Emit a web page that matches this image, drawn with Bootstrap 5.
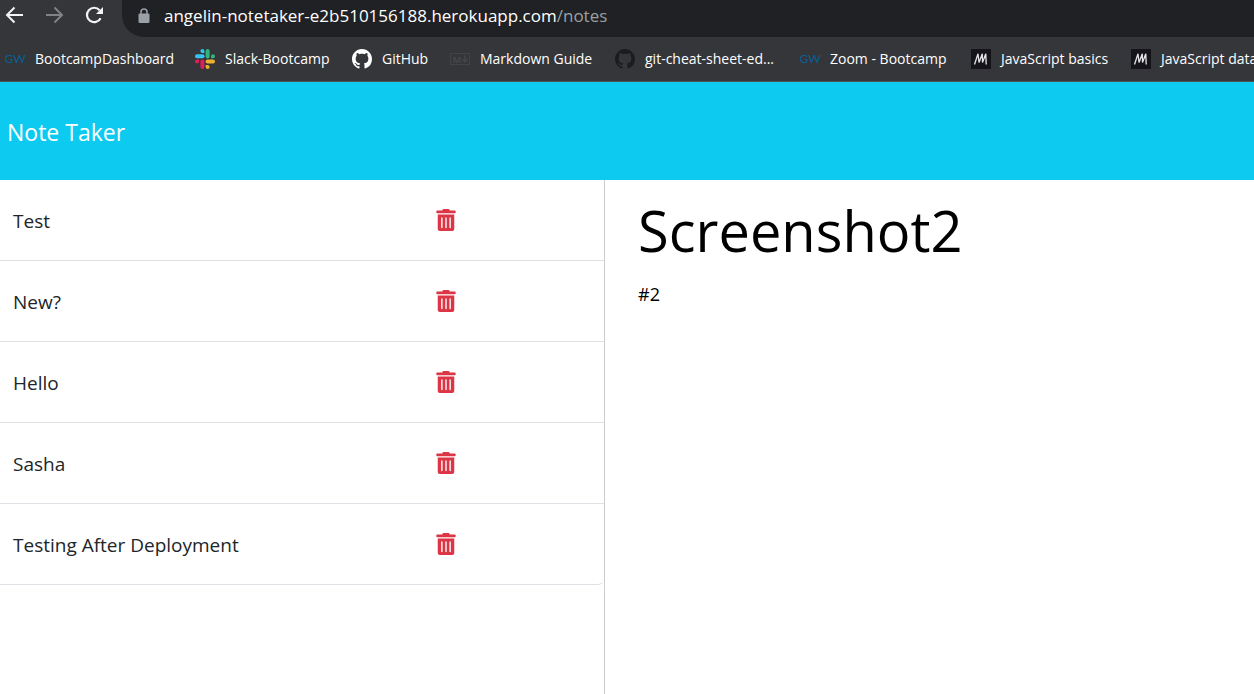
<!DOCTYPE html>
<html lang="en">
<head>
<meta charset="utf-8">
<meta name="viewport" content="width=device-width, initial-scale=1">
<title>Note Taker</title>
<link href="https://cdn.jsdelivr.net/npm/bootstrap@5.3.0/dist/css/bootstrap.min.css" rel="stylesheet">
<style>
  body { font-family: "Open Sans", "Noto Sans", sans-serif; background: #fff; }
  .browser { background: #35363a; color: #fff; border-bottom: 1px solid #505256; }
  .toolbar { height: 37px; }
  .toolbar .tool { width: 40px; height: 30px; color: #f1f3f4; }
  .toolbar .tool:disabled { color: #808285; opacity: 1; }
  .address { background: #202124; border-radius: 0 0 0 22px; height: 37px; font-family: "Noto Sans", sans-serif; font-size: 16px; line-height: 32px; margin-left: 2px; padding-left: 16px; }
  .address-path { color: #9aa0a6; }
  .address-text { margin-left: 14px; font-family: "Open Sans", sans-serif; font-size: 17px; }
  .bookmarks { display: grid; grid-template-columns: 190px 157px 98px 165px 185px 171px 160px auto; height: 44px; padding-left: 5px; font-size: 14px; }
  .bookmarks a { gap: 10px; color: #fff; }
  .bookmarks span { padding-bottom: 2px; }
  .site-header { background: #0dcaf0; height: 98px; padding: 2px 7px 0; }
  .site-header a { font-size: 23px; }
  .workspace { min-height: calc(100vh - 180px); }
  .notes-pane { flex: 0 0 48.25%; border-right: 1px solid #ccc; }
  .note-row { height: 81px; padding: 0 13px; border-width: 0 0 1px; font-size: 19px; color: #212529; }
  .note-row:last-child { border-bottom-right-radius: 6px; }
  .note-title { flex: 0 0 73%; padding-top: 2px; }
  .note-pane { padding: 14px 33px; color: #000; }
  .note-heading { font-size: 56px; line-height: 72px; font-weight: 400; margin-bottom: 14px; }
  .note-body { font-size: 18px; line-height: 28px; }
</style>
</head>
<body>
<svg class="d-none" aria-hidden="true">
  <symbol id="trash" viewBox="0 0 448 512"><path fill="currentColor" d="M32 464a48 48 0 0 0 48 48h288a48 48 0 0 0 48-48V128H32zm272-256a16 16 0 0 1 32 0v224a16 16 0 0 1-32 0zm-96 0a16 16 0 0 1 32 0v224a16 16 0 0 1-32 0zm-96 0a16 16 0 0 1 32 0v224a16 16 0 0 1-32 0zM432 32H312l-9.4-18.7A24 24 0 0 0 281.1 0H166.8a23.72 23.72 0 0 0-21.4 13.3L136 32H16A16 16 0 0 0 0 48v32a16 16 0 0 0 16 16h416a16 16 0 0 0 16-16V48a16 16 0 0 0-16-16z"/></symbol>
  <symbol id="github" viewBox="0 0 16 16"><path fill="currentColor" d="M8 0C3.58 0 0 3.58 0 8c0 3.54 2.29 6.53 5.47 7.59.4.07.55-.17.55-.38 0-.19-.01-.82-.01-1.49-2.01.37-2.53-.49-2.69-.94-.09-.23-.48-.94-.82-1.13-.28-.15-.68-.52-.01-.53.63-.01 1.08.58 1.23.82.72 1.21 1.87.87 2.33.66.07-.52.28-.87.51-1.07-1.78-.2-3.64-.89-3.64-3.95 0-.87.31-1.59.82-2.15-.08-.2-.36-1.02.08-2.12 0 0 .67-.21 2.2.82.64-.18 1.32-.27 2-.27.68 0 1.36.09 2 .27 1.53-1.04 2.2-.82 2.2-.82.44 1.1.16 1.92.08 2.12.51.56.82 1.27.82 2.15 0 3.07-1.87 3.75-3.65 3.95.29.25.54.73.54 1.48 0 1.07-.01 1.93-.01 2.2 0 .21.15.46.55.38A8.013 8.013 0 0016 8c0-4.42-3.58-8-8-8z"/></symbol>
  <symbol id="gw" viewBox="0 0 20 20"><text x="10" y="14" text-anchor="middle" font-family="Lato, sans-serif" font-size="12" font-weight="400" fill="#075f96">GW</text></symbol>
  <symbol id="mdn" viewBox="0 0 20 20"><path fill="#15141a" d="M0 0h20v20H0z"/><path fill="none" stroke="#e4e4e6" stroke-width="1.300" stroke-linejoin="bevel" d="M3.500 15.500 7 4.700 8 13.500 11.300 4.700 11.500 13.500 14.800 4.700 15.200 15.500"/></symbol>
</svg>

<div class="browser">
  <div class="toolbar d-flex">
    <button class="btn tool p-0 border-0 d-flex align-items-center ps-1" aria-label="Back"><svg width="20" height="20" viewBox="0 0 20 20" fill="none" stroke="currentColor" stroke-width="2"><path d="M19 10H3.500M10.500 2.500 3 10l7.500 7.500"/></svg></button>
    <button class="btn tool p-0 border-0 d-flex align-items-center ps-1" disabled aria-label="Forward"><svg width="20" height="20" viewBox="0 0 20 20" fill="none" stroke="currentColor" stroke-width="2"><path d="M2 10h15.500M10.500 2.500 18 10l-7.500 7.500"/></svg></button>
    <button class="btn tool p-0 border-0 d-flex align-items-center ps-1" aria-label="Reload"><svg width="20" height="20" viewBox="0 0 20 20" fill="none"><path stroke="currentColor" stroke-width="2.200" d="M16.600 13.200A7.200 7.200 0 1 1 15.600 5.200"/><path fill="currentColor" d="M19 2v7h-7z"/></svg></button>
    <div class="address flex-grow-1 d-flex">
      <svg class="flex-shrink-0 mt-2" width="12" height="15" viewBox="0 0 12 15"><path fill="none" stroke="#9aa0a6" stroke-width="1.500" d="M3 6V4a3 3 0 0 1 6 0v2"/><rect y="5.500" x=".5" width="11" height="9.500" rx="1.300" fill="#9aa0a6"/></svg>
      <span class="address-text text-nowrap">angelin-notetaker-e2b510156188.herokuapp.com<span class="address-path">/notes</span></span>
    </div>
  </div>
  <nav class="bookmarks align-items-center overflow-hidden text-nowrap" aria-label="Bookmarks">
    <a href="#" class="d-flex align-items-center text-decoration-none"><svg width="20" height="20"><use href="#gw"/></svg><span>BootcampDashboard</span></a>
    <a href="#" class="d-flex align-items-center text-decoration-none"><svg width="20" height="20" viewBox="0 0 20 20">
      <g fill="#36c5f0"><rect x="0" y="5.300" width="9.500" height="4" rx="2"/><path d="M7.400 0a2 2 0 0 1 2 2v2h-2a2 2 0 0 1 0-4z"/></g>
      <g fill="#2eb67d"><rect x="10.600" y="0" width="4" height="9.400" rx="2"/><path d="M20 7.300a2 2 0 0 1-2 2h-2v-2a2 2 0 0 1 4 0z"/></g>
      <g fill="#ecb22e"><rect x="10.600" y="10.600" width="9.400" height="4" rx="2"/><path d="M12.600 20a2 2 0 0 1-2-2v-2h2a2 2 0 0 1 0 4z"/></g>
      <g fill="#e01e5a"><rect x="5.400" y="10.600" width="4" height="9.400" rx="2"/><path d="M0 12.600a2 2 0 0 1 2-2h2v2a2 2 0 0 1-4 0z"/></g>
    </svg><span>Slack-Bootcamp</span></a>
    <a href="#" class="d-flex align-items-center text-decoration-none"><svg width="20" height="20"><use href="#github"/></svg><span>GitHub</span></a>
    <a href="#" class="d-flex align-items-center text-decoration-none"><svg width="20" height="20" viewBox="0 0 20 20"><rect x=".5" y="4.500" width="19" height="11" fill="none" stroke="#424346"/><text x="2.500" y="13.500" font-family="Open Sans, sans-serif" font-size="9.500" font-weight="700" fill="#454649">M</text><path fill="none" stroke="#454649" stroke-width="1.500" d="M14.800 6.500V13M12.300 10.300l2.500 2.700 2.500-2.700"/></svg><span>Markdown Guide</span></a>
    <a href="#" class="d-flex align-items-center text-decoration-none"><svg width="20" height="20" color="#1b1c1f"><use href="#github"/></svg><span>git-cheat-sheet-ed...</span></a>
    <a href="#" class="d-flex align-items-center text-decoration-none"><svg width="20" height="20"><use href="#gw"/></svg><span>Zoom - Bootcamp</span></a>
    <a href="#" class="d-flex align-items-center text-decoration-none"><svg width="20" height="20"><use href="#mdn"/></svg><span>JavaScript basics</span></a>
    <a href="#" class="d-flex align-items-center text-decoration-none"><svg width="20" height="20"><use href="#mdn"/></svg><span>JavaScript data</span></a>
  </nav>
</div>

<header class="site-header d-flex align-items-center">
  <a href="#" class="text-white text-decoration-none">Note Taker</a>
</header>

<main class="workspace d-flex">
  <section class="notes-pane">
    <ul class="list-group rounded-0">
      <li class="list-group-item note-row d-flex align-items-center"><span class="note-title">Test</span><button class="btn p-0 border-0 text-danger d-flex" aria-label="Delete Test"><svg width="22" height="22"><use href="#trash"/></svg></button></li>
      <li class="list-group-item note-row d-flex align-items-center"><span class="note-title">New?</span><button class="btn p-0 border-0 text-danger d-flex" aria-label="Delete New?"><svg width="22" height="22"><use href="#trash"/></svg></button></li>
      <li class="list-group-item note-row d-flex align-items-center"><span class="note-title">Hello</span><button class="btn p-0 border-0 text-danger d-flex" aria-label="Delete Hello"><svg width="22" height="22"><use href="#trash"/></svg></button></li>
      <li class="list-group-item note-row d-flex align-items-center"><span class="note-title">Sasha</span><button class="btn p-0 border-0 text-danger d-flex" aria-label="Delete Sasha"><svg width="22" height="22"><use href="#trash"/></svg></button></li>
      <li class="list-group-item note-row d-flex align-items-center"><span class="note-title">Testing After Deployment</span><button class="btn p-0 border-0 text-danger d-flex" aria-label="Delete Testing After Deployment"><svg width="22" height="22"><use href="#trash"/></svg></button></li>
    </ul>
  </section>
  <section class="note-pane flex-grow-1">
    <h1 class="note-heading">Screenshot2</h1>
    <p class="note-body mb-0">#2</p>
  </section>
</main>
<script src="https://cdn.jsdelivr.net/npm/bootstrap@5.3.0/dist/js/bootstrap.bundle.min.js"></script>
</body>
</html>
